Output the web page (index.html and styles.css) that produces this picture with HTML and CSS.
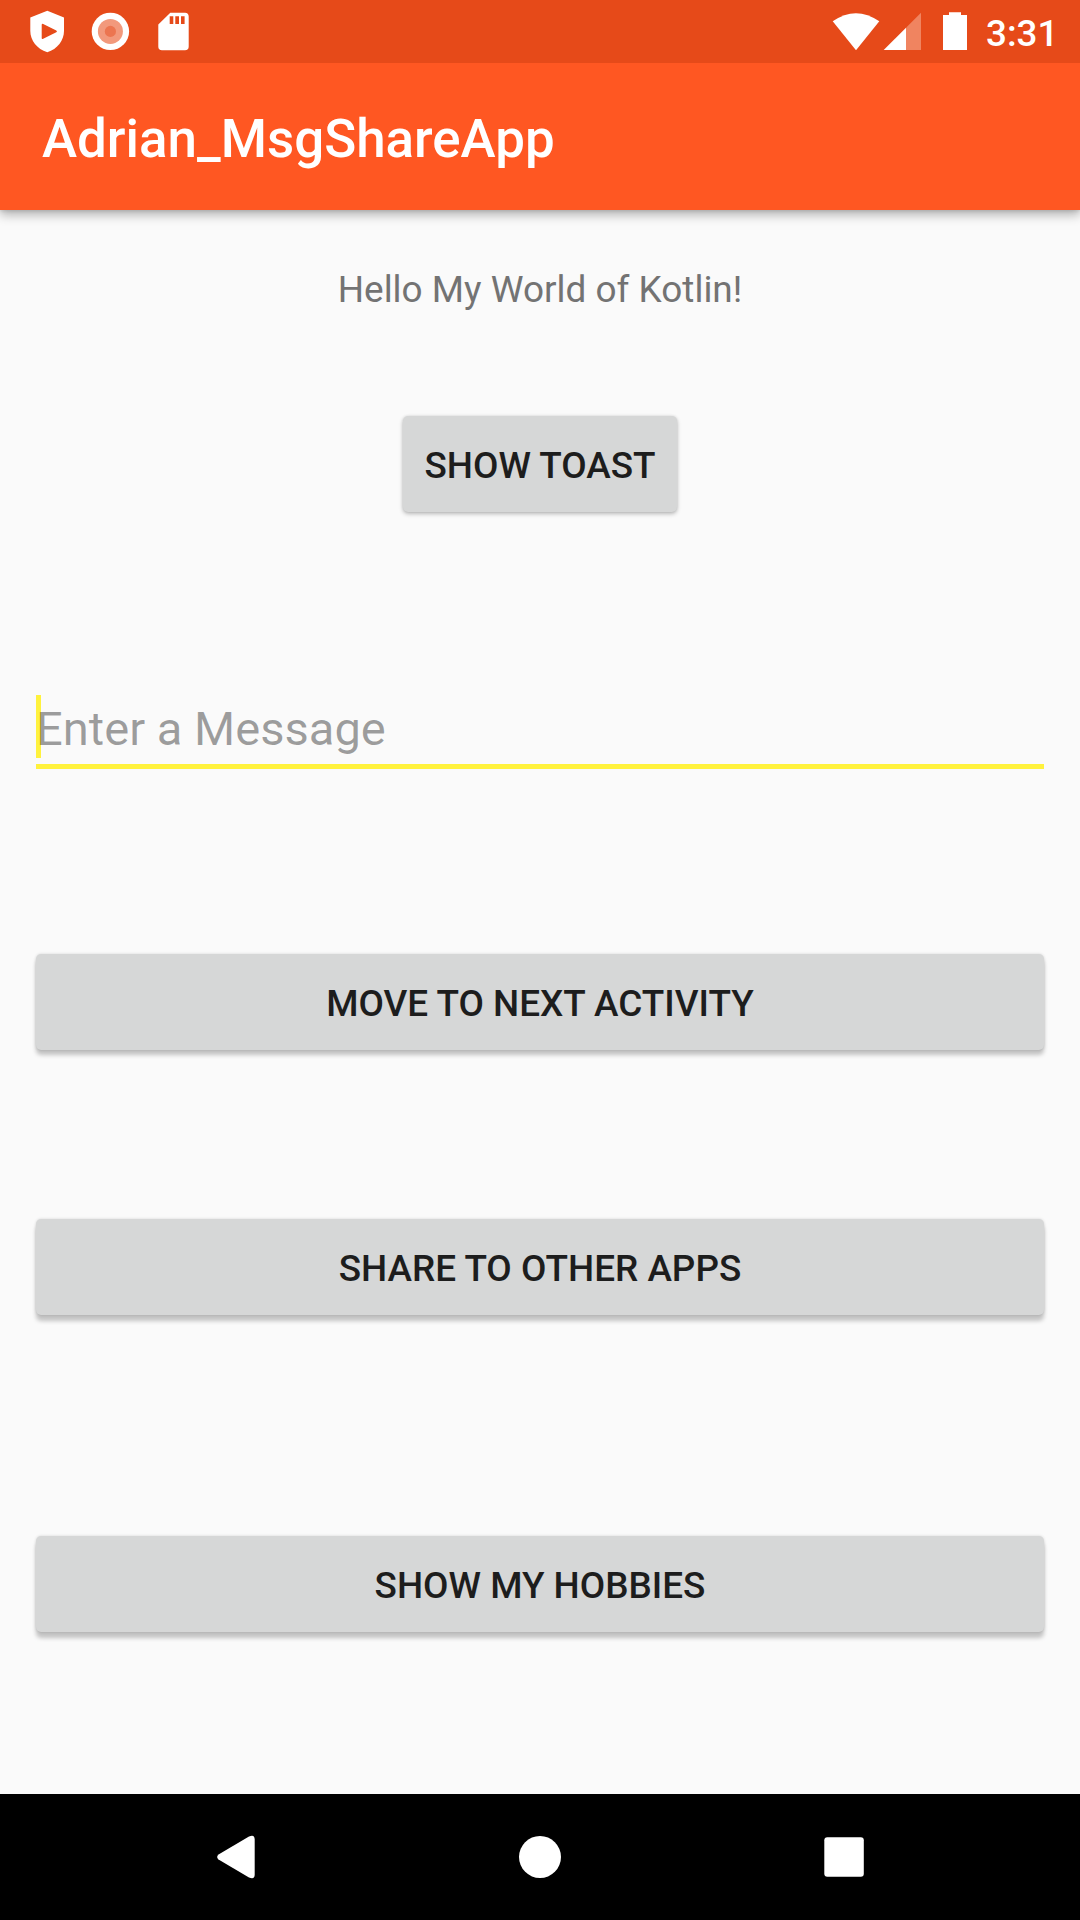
FILE: index.html
```html
<!DOCTYPE html>
<html lang="en">
<head>
<meta charset="utf-8">
<title>Adrian_MsgShareApp</title>
<link rel="stylesheet" href="styles.css">
</head>
<body>
<div class="screen">
  <div class="status-bar">
    <svg class="notifications" width="200" height="63" viewBox="0 0 200 63">
      <path fill="#fff" fill-rule="evenodd" d="M47.300 10.700 64 17.600V31C64 40.500 57.500 49 47.300 52.300 37 49 30.300 40.500 30.300 31V17.600ZM41.700 25V38Q41.700 39.700 43.200 38.800L56.300 32.300Q57.700 31.400 56.300 30.500L43.200 23.900Q41.700 23.200 41.700 25Z"/>
      <circle cx="110.400" cy="31.400" r="18.700" fill="#fff"/>
      <circle cx="110.400" cy="31.400" r="12.500" fill="#f2997c"/>
      <circle cx="110.400" cy="31.400" r="5.600" fill="#ec7550"/>
      <path fill="#fff" fill-rule="evenodd" d="M170.300 12.700H185Q188.700 12.700 188.700 16.500V46.500Q188.700 50.300 185 50.300H162Q158.300 50.300 158.300 46.500V24.500ZM169.700 16.300V24H173.300V16.300ZM175.300 16.300V24H179V16.300ZM181 16.300V24H184.600V16.300Z"/>
    </svg>
    <div class="system">
      <svg width="144" height="63" viewBox="830 0 144 63">
        <path fill="#fff" d="M832.700 21.300Q855.900 5 879.300 21.300L856 50.300Z"/>
        <path fill="#f08460" d="M921 12.700V50H906V27.700Z"/>
        <path fill="#fff" d="M883.700 50 906 27.700V50Z"/>
        <path fill="#fff" d="M949 12.200H961V15H967V50H943V15H949Z"/>
      </svg>
      <span class="clock">3:31</span>
    </div>
  </div>
  <header class="app-bar"><h1 class="title">Adrian_MsgShareApp</h1></header>
  <main class="content">
    <p class="greeting">Hello My World of Kotlin!</p>
    <button class="button toast">Show Toast</button>
    <div class="field"><span class="caret"></span><span class="hint">Enter a Message</span></div>
    <button class="button wide next">Move to next activity</button>
    <button class="button wide share">Share to other apps</button>
    <button class="button wide hobbies">Show my hobbies</button>
  </main>
  <nav class="nav-bar">
    <svg width="1080" height="126" viewBox="0 0 1080 126">
      <path fill="#fff" d="M218.500 60.500 249 42.500Q254.700 40 254.700 45.500V80.500Q254.700 86 249 83.500L218.500 65.500Q215.800 63 218.500 60.500Z"/>
      <circle cx="540" cy="63" r="21" fill="#fff"/>
      <rect x="824.300" y="43.300" width="39.500" height="39.500" rx="3" fill="#fff"/>
    </svg>
  </nav>
</div>
</body>
</html>
```
FILE: styles.css
```css
* { box-sizing: border-box; }
body { margin: 0; font-family: Roboto, sans-serif; }
.screen {
  display: flex;
  flex-direction: column;
  width: 1080px;
  height: 1920px;
  overflow: hidden;
  background: #fafafa;
}
.status-bar {
  position: relative;
  z-index: 1;
  display: flex;
  justify-content: space-between;
  height: 63px;
  background: #e64a19;
}
.status-bar svg, .nav-bar svg { display: block; }
.system { display: flex; padding-right: 24px; }
.clock {
  width: 70px;
  margin-left: 12px;
  color: #fff;
  font-size: 36.75px;
  font-weight: 500;
  line-height: 68px;
  white-space: nowrap;
}
.app-bar {
  display: flex;
  align-items: center;
  height: 147px;
  padding: 5px 42px 0;
  background: #ff5722;
  box-shadow: 0 5px 10px rgba(0, 0, 0, .28), 0 1px 4px rgba(0, 0, 0, .12);
}
.title {
  margin: 0;
  color: #fff;
  font-size: 52.9px;
  font-weight: 500;
  line-height: 62px;
}
.content {
  display: flex;
  flex: 1;
  flex-direction: column;
  align-items: center;
  padding: 57px 36px 0;
}
.greeting {
  margin: 0 0 83px;
  color: #737373;
  font-size: 36.95px;
  line-height: 44px;
  height: 66px;
  padding-top: 1px;
}
.button {
  display: block;
  flex: none;
  height: 96px;
  padding: 3px 0 0;
  border: 0;
  border-radius: 5px;
  background: #d6d7d7;
  color: #1d1d1d;
  font: 500 36.9px/44px Roboto, sans-serif;
  text-transform: uppercase;
  box-shadow: 0 2px 4px rgba(0, 0, 0, .25), 0 0 3px rgba(0, 0, 0, .1);
}
.toast { width: 274px; }
.wide { width: 100%; box-shadow: 0 5px 4px rgba(0, 0, 0, .22), 0 0 3px rgba(0, 0, 0, .15); }
.field {
  position: relative;
  width: 100%;
  height: 74px;
  margin: 183px 0 185px;
  border-bottom: 5px solid #fff23d;
}
.caret {
  position: absolute;
  top: 0;
  left: 0;
  width: 5px;
  height: 63px;
  background: #fff23d;
}
.hint {
  position: relative;
  display: block;
  color: rgba(0, 0, 0, .38);
  font-size: 47.1px;
  line-height: 68px;
}
.share { margin-top: 169px; }
.hobbies { margin-top: 221px; }
.hobbies, .share { box-shadow: 0 6px 4px rgba(0, 0, 0, .22), 0 0 3px rgba(0, 0, 0, .15); }
.nav-bar { height: 126px; background: #000; }
```
